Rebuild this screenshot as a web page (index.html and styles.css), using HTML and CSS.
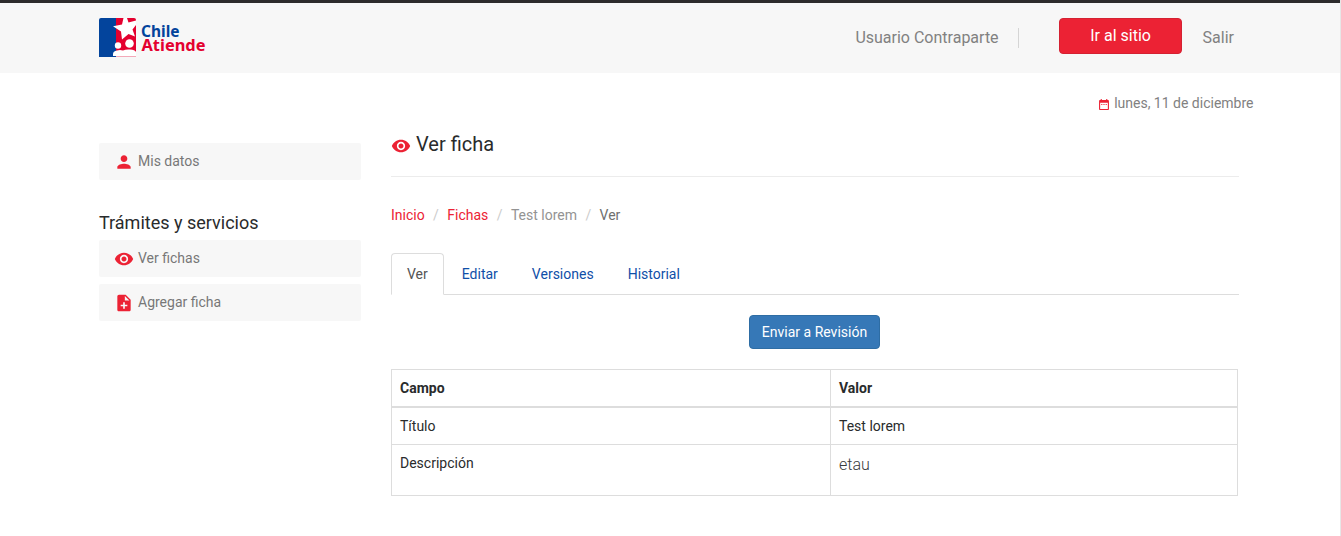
FILE: index.html
```html
<!DOCTYPE html>
<html lang="es">
<head>
<meta charset="utf-8">
<title>ChileAtiende - Ver ficha</title>
<link rel="stylesheet" href="styles.css">
</head>
<body>
<svg class="defs" width="0" height="0">
  <symbol id="eye" viewBox="0 0 24 24"><path d="M12 4.500C7 4.500 2.730 7.610 1 12c1.730 4.390 6 7.500 11 7.500s9.270-3.110 11-7.500c-1.730-4.390-6-7.500-11-7.500zM12 17c-2.760 0-5-2.240-5-5s2.240-5 5-5 5 2.240 5 5-2.240 5-5 5zm0-8c-1.660 0-3 1.340-3 3s1.340 3 3 3 3-1.340 3-3-1.340-3-3-3z"/></symbol>
  <symbol id="person" viewBox="0 0 24 24"><path d="M12 12c2.210 0 4-1.790 4-4s-1.790-4-4-4-4 1.790-4 4 1.790 4 4 4zm0 2c-2.670 0-8 1.340-8 4v2h16v-2c0-2.660-5.330-4-8-4z"/></symbol>
  <symbol id="note-add" viewBox="0 0 24 24"><path d="M14 2H6c-1.100 0-1.990.9-1.990 2L4 20c0 1.100.890 2 1.990 2H18c1.100 0 2-.9 2-2V8l-6-6zm2 14h-3v3h-2v-3H8v-2h3v-3h2v3h3v2zm-3-7V3.500L18.500 9H13z"/></symbol>
  <symbol id="calendar" viewBox="3 2 18 20"><path d="M9 11H7v2h2v-2zm4 0h-2v2h2v-2zm4 0h-2v2h2v-2zm2-7h-1V2h-2v2H8V2H6v2H5c-1.110 0-1.990.9-1.990 2L3 20c0 1.100.890 2 2 2h14c1.100 0 2-.9 2-2V6c0-1.100-.9-2-2-2zm0 16H5V9h14v11z"/></symbol>
</svg>
<header class="topbar">
  <a class="brand">
    <svg width="108" height="40" viewBox="0 0 108 40">
      <path fill="#03449c" d="M2 0H17V39H0V2Q0 0 2 0Z"/>
      <path fill="#e4002f" d="M17 0H35Q37 0 37 2V38H17Z"/>
      <path fill="#f3a9b9" d="M17 38H37V39H17Z"/>
      <path fill="#fff" d="M24.500 0H28L29.500 4.500L37 2.500V7L33.500 11.500L36 18.500L29.500 16L23 21.500L22 13.500L14 8.300L23 6.500Z"/>
      <circle cx="30.500" cy="25.500" r="4.300" fill="#fff"/>
      <circle cx="19" cy="27.500" r="3.200" fill="#fff"/>
      <path fill="#fff" d="M14 38V36Q14 33 18 32.500Q21 31.500 24 32.500Q27 31 31 31.500Q36 31.500 37 34V38Z"/>
      <text class="brand-chile" x="42" y="18.500" textLength="38.500" lengthAdjust="spacingAndGlyphs">Chile</text>
      <text class="brand-atiende" x="42.500" y="33" textLength="64" lengthAdjust="spacingAndGlyphs">Atiende</text>
    </svg>
  </a>
  <nav class="user-nav">
    <span class="user-name">Usuario Contraparte</span>
    <a class="btn-site">Ir al sitio</a>
    <a class="logout">Salir</a>
  </nav>
</header>
<div class="date"><svg class="icon-date"><use href="#calendar"/></svg><span>lunes, 11 de diciembre</span></div>
<div class="layout">
  <aside class="sidebar">
    <a class="side-link"><svg class="icon"><use href="#person"/></svg><span>Mis datos</span></a>
    <h2 class="side-title"><span>Trámites y servicios</span></h2>
    <a class="side-link"><svg class="icon"><use href="#eye"/></svg><span>Ver fichas</span></a>
    <a class="side-link"><svg class="icon"><use href="#note-add"/></svg><span>Agregar ficha</span></a>
  </aside>
  <main class="content">
    <h1 class="page-title"><svg class="icon"><use href="#eye"/></svg><span>Ver ficha</span></h1>
    <div class="breadcrumb">
      <a>Inicio</a><i>/</i><a>Fichas</a><i>/</i><span class="muted">Test lorem</span><i>/</i><span>Ver</span>
    </div>
    <div class="tabs">
      <a class="tab active">Ver</a><a class="tab">Editar</a><a class="tab">Versiones</a><a class="tab">Historial</a>
    </div>
    <div class="actions"><a class="btn-send">Enviar a Revisión</a></div>
    <table class="data">
      <thead><tr><th class="col-field">Campo</th><th>Valor</th></tr></thead>
      <tbody>
        <tr><td>Título</td><td>Test lorem</td></tr>
        <tr><td>Descripción</td><td><p class="desc">etau</p></td></tr>
      </tbody>
    </table>
  </main>
</div>
</body>
</html>
```
FILE: styles.css
```css
* { box-sizing: border-box; }
html { background: #fff; }
body {
  margin: 0;
  min-height: 536px;
  font: 14px/20px Roboto, sans-serif;
  color: #292b2c;
  border-right: 1px solid #e7e7e7;
}
.defs { display: block; width: 0; height: 0; }
.topbar {
  display: flex;
  justify-content: space-between;
  align-items: flex-start;
  height: 73px;
  padding: 15px 106px 0 99px;
  border-top: 3px solid #2d2b2c;
  background: #f7f7f7;
}
.brand svg { display: block; }
.brand text { font: bold 15.5px "Noto Sans", sans-serif; }
.brand-chile { fill: #03449c; }
.brand-atiende { fill: #e4002f; }
.user-nav { display: flex; font-size: 16px; color: #818181; }
.user-name {
  height: 20px;
  margin: 10px 40px 0 0;
  padding-right: 19px;
  border-right: 1px solid #d5d5d5;
}
.btn-site {
  width: 123px;
  height: 36px;
  padding-left: 1px;
  line-height: 34px;
  text-align: center;
  color: #fff;
  background: #ec2234;
  border: 1px solid #d42132;
  border-radius: 4px;
}
.logout { margin: 10px 0 0 21px; }
.date {
  display: flex;
  justify-content: flex-end;
  align-items: center;
  gap: 5px;
  height: 20px;
  margin: 20px 86.500px 30px 0;
  color: #818181;
}
.icon-date { width: 10px; height: 11px; margin-top: 3px; fill: #ec2234; }
.icon { width: 20px; height: 20px; flex: none; fill: #ec2234; }
.layout { display: flex; gap: 30px; padding-left: 99px; }
.sidebar { width: 262px; }
.side-link {
  display: flex;
  align-items: center;
  gap: 4px;
  height: 37px;
  margin-bottom: 7px;
  padding: 0 0 1px 15px;
  border-radius: 2px;
  background: #f7f7f7;
  color: #777;
}
.side-link .icon { margin-top: 2px; }
.side-title { margin: 32px 0 6px; font-size: 18px; line-height: 22px; font-weight: 400; }
.content { width: 848px; margin-top: -9px; }
.page-title {
  display: flex;
  align-items: center;
  gap: 5px;
  height: 43px;
  margin: 0;
  padding-bottom: 22px;
  border-bottom: 1px solid #ececec;
  font-size: 20px;
  line-height: 20px;
  font-weight: 400;
}
.page-title .icon { margin-top: 4px; }
.breadcrumb { display: flex; margin: 28px 0 28px; color: #6f6f6f; }
.breadcrumb a { color: #ec2234; }
.breadcrumb i { width: 22.600px; text-align: center; font-style: normal; color: #ccc; }
.breadcrumb .muted { color: #939393; }
.tabs { display: flex; gap: 2px; border-bottom: 1px solid #ddd; }
.tab {
  height: 42px;
  margin-bottom: -1px;
  padding: 10px 15px;
  border: 1px solid transparent;
  border-radius: 4px 4px 0 0;
  color: #0f4fa8;
}
.tab.active { color: #555; background: #fff; border-color: #ddd #ddd #fff; }
.actions { display: flex; justify-content: center; margin: 20px 0; }
.btn-send {
  height: 34px;
  margin-right: 1px;
  padding: 6px 12px;
  color: #fff;
  background: #3678b7;
  border: 1px solid #2e6da4;
  border-radius: 4px;
}
.data { width: 847px; table-layout: fixed; border-collapse: collapse; }
.data th, .data td {
  height: 37px;
  padding: 8px;
  border: 1px solid #ddd;
  text-align: left;
  vertical-align: top;
}
.data .col-field { width: 439px; }
.data th { height: 37px; border-bottom-width: 2px; padding-bottom: 7px; }
.desc { margin: 0 0 10px; font-size: 16px; font-weight: 300; line-height: 24px; color: #373a3c; }
```
